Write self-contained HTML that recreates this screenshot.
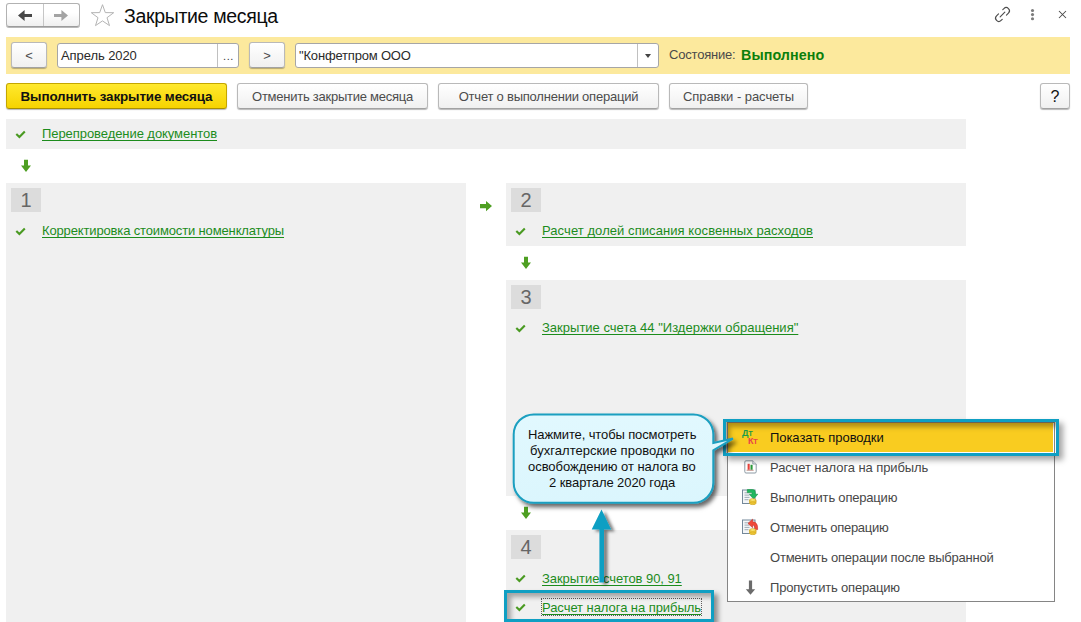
<!DOCTYPE html>
<html lang="ru">
<head>
<meta charset="utf-8">
<title>Закрытие месяца</title>
<style>
*{box-sizing:border-box;margin:0;padding:0}
html,body{width:1081px;height:622px;overflow:hidden;background:#fff}
body{position:relative;font-family:"Liberation Sans",Arial,sans-serif;font-size:13px;color:#333}
.abs{position:absolute}
.btn{position:absolute;height:26px;border:1px solid #b9b9b9;border-bottom-color:#a2a2a2;border-radius:3px;background:linear-gradient(#ffffff,#f0f0f0);box-shadow:0 1px 1px rgba(0,0,0,.28);font-size:13px;color:#4c4c4c;text-align:center;line-height:25px;white-space:nowrap}
.btn span,.inp span{display:inline-block;white-space:nowrap}
.inp{position:absolute;height:25px;border:1px solid #a6a6a6;border-radius:3px;background:#fff;font-size:13px;color:#2a2a2a;line-height:24px;padding-left:3px;white-space:nowrap;overflow:hidden}
.gray{position:absolute;background:#f0f0f0}
.num{position:absolute;width:30px;height:24px;background:#dcdcdc;color:#666;font-size:20px;line-height:25px;text-align:center}
.lnk{position:absolute;color:#1c8c1c;text-decoration:underline;text-decoration-thickness:1px;text-underline-offset:2px;text-decoration-skip-ink:none;font-size:13px;white-space:nowrap;line-height:16px}
.mi{position:absolute;left:42px;font-size:13px;color:#474747;white-space:nowrap;line-height:16px}
.ct{position:absolute;white-space:nowrap;font-size:13px;line-height:16px;color:#101010}

#title{letter-spacing:-.32px;left:124px;font-size:19.5px !important;color:#0c0c0c !important}
#t_apr{letter-spacing:-.08px}
#t_org{letter-spacing:-.18px}
#t_state{letter-spacing:-.2px}
#t_done{letter-spacing:.08px}
#t_b1{letter-spacing:-.12px}
#t_b2{letter-spacing:-.25px}
#t_b3{letter-spacing:-.22px}
#t_b4{letter-spacing:-.05px}
#m1{letter-spacing:-.06px}#m2{letter-spacing:-.085px}#m3{letter-spacing:-.2px}#m4{letter-spacing:-.3px}#m5{letter-spacing:-.22px}#m6{letter-spacing:-.2px}
#c1{letter-spacing:-.12px}#c2{letter-spacing:.04px}#c3{letter-spacing:-.04px}#c4{letter-spacing:-.076px}
#l0{letter-spacing:-.065px}#l1{letter-spacing:-.143px}#l2{letter-spacing:.071px}#l3{letter-spacing:.008px}#l4{letter-spacing:-.056px}#l5{letter-spacing:-.055px}
</style>
</head>
<body>

<!-- nav buttons -->
<div class="abs" id="nav" style="left:6px;top:3px;width:74px;height:24px;border:1px solid #b2b2b2;border-bottom-color:#9c9c9c;border-radius:3px;background:linear-gradient(#fff 40%,#efefef);box-shadow:0 1px 0 rgba(0,0,0,.28)">
  <div class="abs" style="left:36px;top:0;width:1px;height:22px;background:#c6c6c6"></div>
  <svg class="abs" style="left:11px;top:6px" width="14" height="11" viewBox="0 0 14 11"><path d="M0 5.5 L6.6 0 V3.9 H14 V7.1 H6.6 V11 Z" fill="#474747"/></svg>
  <svg class="abs" style="left:47px;top:6px" width="14" height="11" viewBox="0 0 14 11"><path d="M14 5.5 L7.4 0 V3.9 H0 V7.1 H7.4 V11 Z" fill="#a3a3a3"/></svg>
</div>
<!-- star -->
<svg class="abs" style="left:90px;top:3px" width="25" height="24" viewBox="0 0 25 24"><path d="M12.5 1.7 L15.3 9.6 L23.7 9.7 L17 14.7 L19.5 22.6 L12.5 17.9 L5.5 22.6 L8 14.7 L1.3 9.7 L9.7 9.6 Z" fill="#fff" stroke="#b4b4b4" stroke-width="1"/></svg>
<div class="abs" id="title" style="left:124px;top:4px;font-size:19px;line-height:24px;color:#1a1a1a;white-space:nowrap">Закрытие месяца</div>

<!-- top right icons -->
<svg class="abs" style="left:992px;top:4px" width="21" height="21" viewBox="-10.5 -10.5 21 21" fill="none" stroke="#4d4d4d" stroke-width="1.15" stroke-linecap="round"><g transform="rotate(-45)"><path d="M-2.4 -3.2 H-5.2 a3.2 3.2 0 0 0 0 6.4 H-3.6"/><path d="M2.4 3.2 H5.2 a3.2 3.2 0 0 0 0 -6.4 H3.6"/><path d="M-3.3 0 H3.3"/></g></svg>
<svg class="abs" style="left:1030px;top:8px" width="5" height="13" viewBox="0 0 5 13"><circle cx="2.5" cy="2.5" r="1.55" fill="#7c7c7c"/><circle cx="2.5" cy="6.6" r="1.55" fill="#7c7c7c"/><circle cx="2.5" cy="10.7" r="1.55" fill="#7c7c7c"/></svg>
<svg class="abs" style="left:1058px;top:10px" width="9" height="9" viewBox="0 0 9 9"><path d="M1 1 L8 8 M8 1 L1 8" stroke="#4a4a4a" stroke-width="1.05"/></svg>

<!-- yellow band -->
<div class="abs" style="left:6px;top:37px;width:1064px;height:37px;background:#fce99d"></div>
<div class="btn" style="left:11px;top:42px;width:36px;"><span>&lt;</span></div>
<div class="inp" style="left:57px;top:43px;width:182px;"><span id="t_apr">Апрель 2020</span><div class="abs" style="right:0;top:0;width:21px;height:23px;border-left:1px solid #c0c0c0;text-align:center;color:#3a3a3a;padding:0 0 0 1px;font-size:11px;line-height:24px;letter-spacing:.6px">...</div></div>
<div class="btn" style="left:249px;top:42px;width:36px;"><span>&gt;</span></div>
<div class="inp" style="left:295px;top:43px;width:364px;"><span id="t_org">"Конфетпром ООО</span><div class="abs" style="right:0;top:0;width:21px;height:23px;border-left:1px solid #c0c0c0"><div class="abs" style="left:7px;top:10px;border:3px solid transparent;border-top:4px solid #444;border-bottom:0"></div></div></div>
<div class="abs" id="t_state" style="left:669px;top:47px;font-size:13px;line-height:16px;color:#4a4a4a;white-space:nowrap">Состояние:</div>
<div class="abs" id="t_done" style="left:741px;top:47px;font-size:14.3px;font-weight:bold;line-height:16px;color:#0b7f0b;white-space:nowrap">Выполнено</div>

<!-- buttons row -->
<div class="btn" style="left:6px;top:83px;width:221px;background:linear-gradient(#ffe92e,#f6d300);border-color:#c4a600;border-bottom-color:#a98f00;color:#111;font-weight:bold;font-size:13.4px"><span id="t_b1">Выполнить закрытие месяца</span></div>
<div class="btn" style="left:237px;top:83px;width:191px;"><span id="t_b2">Отменить закрытие месяца</span></div>
<div class="btn" style="left:438px;top:83px;width:221px;"><span id="t_b3">Отчет о выполнении операций</span></div>
<div class="btn" style="left:669px;top:83px;width:139px;"><span id="t_b4">Справки - расчеты</span></div>
<div class="btn" style="left:1040px;top:83px;width:30px;color:#111;font-size:16px"><span>?</span></div>

<!-- step 0 -->
<div class="gray" style="left:6px;top:119px;width:960px;height:30px"></div>
<svg class="abs chk" style="left:14.5px;top:130px" width="11" height="9" viewBox="0 0 11 9"><path d="M1.3 3.9 L4.4 7 L9.8 1.4" fill="none" stroke="#4a9a22" stroke-width="2.1"/></svg>
<div class="lnk" id="l0" style="left:42px;top:126px">Перепроведение документов</div>
<svg class="abs" style="left:20px;top:159px" width="12" height="13" viewBox="0 0 12 13"><path d="M4 .8 H8 V6.6 H11 L6 12.9 L1 6.6 H4 Z" fill="#4e9f22"/></svg>

<!-- block 1 -->
<div class="gray" style="left:6px;top:183px;width:460px;height:439px"></div>
<div class="num" style="left:11px;top:188px">1</div>
<svg class="abs chk" style="left:14.5px;top:227px" width="11" height="9" viewBox="0 0 11 9"><path d="M1.3 3.9 L4.4 7 L9.8 1.4" fill="none" stroke="#4a9a22" stroke-width="2.1"/></svg>
<div class="lnk" id="l1" style="left:42px;top:223px">Корректировка стоимости номенклатуры</div>
<svg class="abs" style="left:479px;top:200px" width="14" height="12" viewBox="0 0 14 12"><path d="M1 4 V8.3 H7 V11.2 L13 6.1 L7 1 V4 Z" fill="#4e9f22"/></svg>

<!-- block 2 -->
<div class="gray" style="left:506px;top:183px;width:460px;height:63px"></div>
<div class="num" style="left:511px;top:188px">2</div>
<svg class="abs chk" style="left:514.5px;top:227px" width="11" height="9" viewBox="0 0 11 9"><path d="M1.3 3.9 L4.4 7 L9.8 1.4" fill="none" stroke="#4a9a22" stroke-width="2.1"/></svg>
<div class="lnk" id="l2" style="left:542px;top:223px">Расчет долей списания косвенных расходов</div>
<svg class="abs" style="left:520px;top:256px" width="12" height="13" viewBox="0 0 12 13"><path d="M4 .8 H8 V6.6 H11 L6 12.9 L1 6.6 H4 Z" fill="#4e9f22"/></svg>

<!-- block 3 -->
<div class="gray" style="left:506px;top:280px;width:460px;height:216px"></div>
<div class="num" style="left:511px;top:285px">3</div>
<svg class="abs chk" style="left:514.5px;top:324px" width="11" height="9" viewBox="0 0 11 9"><path d="M1.3 3.9 L4.4 7 L9.8 1.4" fill="none" stroke="#4a9a22" stroke-width="2.1"/></svg>
<div class="lnk" id="l3" style="left:542px;top:320px">Закрытие счета 44 "Издержки обращения"</div>
<svg class="abs" style="left:520px;top:506px" width="12" height="13" viewBox="0 0 12 13"><path d="M4 .8 H8 V6.6 H11 L6 12.9 L1 6.6 H4 Z" fill="#4e9f22"/></svg>

<!-- block 4 -->
<div class="gray" style="left:506px;top:530px;width:460px;height:92px"></div>
<div class="num" style="left:511px;top:535px">4</div>
<svg class="abs chk" style="left:514.5px;top:574px" width="11" height="9" viewBox="0 0 11 9"><path d="M1.3 3.9 L4.4 7 L9.8 1.4" fill="none" stroke="#4a9a22" stroke-width="2.1"/></svg>
<div class="lnk" id="l4" style="left:542px;top:571px">Закрытие счетов 90, 91</div>
<svg class="abs chk" style="left:514.5px;top:603px" width="11" height="9" viewBox="0 0 11 9"><path d="M1.3 3.9 L4.4 7 L9.8 1.4" fill="none" stroke="#4a9a22" stroke-width="2.1"/></svg>
<div class="lnk" id="l5" style="left:542px;top:600px">Расчет налога на прибыль</div>
<div class="abs" style="left:541px;top:598px;width:161px;height:18px;border:1px dotted #5e5e5e"></div>

<!-- highlight box bottom -->
<div class="abs" style="left:504px;top:590px;width:210px;height:32px;border:3px solid #0f9fc3;box-shadow:4px 4px 5px rgba(0,0,0,.42), inset 4px 4px 5px rgba(0,0,0,.32)"></div>

<!-- arrow up -->
<svg class="abs" style="left:580px;top:505px;overflow:visible" width="44" height="82" viewBox="0 0 44 82">
  <defs><filter id="sh" x="-50%" y="-20%" width="200%" height="140%"><feDropShadow dx="3.5" dy="2" stdDeviation="1.6" flood-color="#000" flood-opacity=".5"/></filter></defs>
  <g filter="url(#sh)"><path d="M19.4 77.4 V24.6 H11.7 L21.5 4.4 L31.2 24.6 H24 V77.4 Z" fill="#0f9fc3"/></g>
</svg>

<!-- context menu -->
<div class="abs" id="menu" style="left:727px;top:422px;width:328px;height:180px;background:#fff;border:1px solid #858585">
  <div class="abs" style="left:0;top:0;width:325px;height:29px;background:#f9cc20"></div>
  <div class="abs" style="left:14px;top:6px;font-size:9px;font-weight:bold;line-height:8px;color:#1a9c4a;letter-spacing:-.2px">Д<span style="font-size:7.4px">Т</span></div>
  <div class="abs" style="left:20px;top:13.5px;font-size:9px;font-weight:bold;line-height:8px;color:#e8414a;letter-spacing:-.2px">К<span style="font-size:7.4px">Т</span></div>
  <div class="mi" id="m1" style="top:7px;color:#111">Показать проводки</div>
  <!-- icon: report -->
  <svg class="abs" style="left:16px;top:37px" width="14" height="14" viewBox="0 0 14 14"><path d="M2 .8 H8.8 L12.2 4 V11.8 a1.2 1.2 0 0 1 -1.2 1.2 H2 a1.2 1.2 0 0 1 -1.2 -1.2 V2 A1.2 1.2 0 0 1 2 .8 Z" fill="#fff" stroke="#8c9aa4" stroke-width="1"/><path d="M8.8 .8 V4 H12.2" fill="#e8edf0" stroke="#8c9aa4" stroke-width=".8"/><rect x="3.6" y="3.8" width="2.1" height="6" fill="#e8413a"/><rect x="6.5" y="4.8" width="2.1" height="5" fill="#2a9a3a"/><rect x="2.6" y="9.8" width="7" height=".8" fill="#b0766a"/></svg>
  <div class="mi" id="m2" style="top:37px">Расчет налога на прибыль</div>
  <!-- icon: execute -->
  <svg class="abs" style="left:13px;top:64.5px" width="18" height="18" viewBox="0 0 18 18"><rect x="1.5" y="2" width="12.5" height="13.5" fill="#f3f6f8" stroke="#74889a" stroke-width="1"/><path d="M3.5 4.8 H8.5 M3.5 7.1 H8.5 M3.5 9.4 H8.5 M3.5 11.7 H7.5" stroke="#9eacb6" stroke-width="1"/><path d="M6.3 1.6 H11.6 Q14.3 1.6 14.3 4.4 V6.2 H16.8 L12.6 11 L8.4 6.2 H11 V5 Q11 4.6 10.4 4.6 H6.3 Z" fill="#20b860" stroke="#12933f" stroke-width=".6"/><path d="M8.6 12 V15.3 a3.2 1.3 0 0 0 6.4 0 V12 Z" fill="#f5cf3c" stroke="#cfa21a" stroke-width=".7"/><ellipse cx="11.8" cy="12" rx="3.2" ry="1.3" fill="#ffea7a" stroke="#cfa21a" stroke-width=".7"/><path d="M8.6 13.7 a3.2 1.3 0 0 0 6.4 0" fill="none" stroke="#cfa21a" stroke-width=".7"/></svg>
  <div class="mi" id="m3" style="top:67px">Выполнить операцию</div>
  <!-- icon: cancel -->
  <svg class="abs" style="left:13px;top:94.5px" width="18" height="18" viewBox="0 0 18 18"><rect x="1.5" y="2" width="12.5" height="13.5" fill="#f3f6f8" stroke="#74889a" stroke-width="1"/><path d="M3.5 4.8 H8.5 M3.5 7.1 H8.5 M3.5 9.4 H8.5 M3.5 11.7 H7.5" stroke="#9eacb6" stroke-width="1"/><path d="M11.6 1.2 L7 5.4 L11.6 9.6 V7 Q13.9 7.1 13.9 11.6 H16.6 Q17.2 4 11.6 3.8 Z" fill="#f04a3a" stroke="#c62c24" stroke-width=".6"/><path d="M8.6 12 V15.3 a3.2 1.3 0 0 0 6.4 0 V12 Z" fill="#f5cf3c" stroke="#cfa21a" stroke-width=".7"/><ellipse cx="11.8" cy="12" rx="3.2" ry="1.3" fill="#ffea7a" stroke="#cfa21a" stroke-width=".7"/><path d="M8.6 13.7 a3.2 1.3 0 0 0 6.4 0" fill="none" stroke="#cfa21a" stroke-width=".7"/></svg>
  <div class="mi" id="m4" style="top:97px">Отменить операцию</div>
  <div class="mi" id="m5" style="top:127px">Отменить операции после выбранной</div>
  <svg class="abs" style="left:16.5px;top:156.5px" width="11" height="15" viewBox="0 0 11 15"><path d="M3.9 .5 H7.1 V9.3 H10.2 L5.5 14.7 L.8 9.3 H3.9 Z" fill="#6b6b6b"/></svg>
  <div class="mi" id="m6" style="top:157px">Пропустить операцию</div>
</div>
<!-- highlight box menu -->
<div class="abs" style="left:723px;top:419px;width:336px;height:37px;border:3px solid #0f9fc3;box-shadow:4px 4px 6px rgba(0,0,0,.36), inset 4px 5px 5px rgba(60,40,0,.38)"></div>

<!-- callout -->
<svg class="abs" style="left:500px;top:405px;overflow:visible" width="260" height="110" viewBox="0 0 260 110">
  <defs>
    <linearGradient id="cg" x1="0" y1="0" x2="0" y2="1"><stop offset="0" stop-color="#e1f8fe"/><stop offset="1" stop-color="#dbf6fd"/></linearGradient>
    <filter id="sh2" x="-20%" y="-20%" width="140%" height="150%"><feDropShadow dx="3" dy="3.5" stdDeviation="2.2" flood-color="#000" flood-opacity=".6"/></filter>
  </defs>
  <path filter="url(#sh2)" d="M33.7 9.4 H193.3 a20 20 0 0 1 20 20 V38 L233 33.6 L213.3 45.2 V77.8 a20 20 0 0 1 -20 20 H33.7 a20 20 0 0 1 -20 -20 V29.4 a20 20 0 0 1 20 -20 Z" fill="url(#cg)" stroke="#1a9fc0" stroke-width="2" stroke-linejoin="miter"/>
</svg>
<div class="ct" id="c1" style="left:528px;top:427px">Нажмите, чтобы посмотреть</div>
<div class="ct" id="c2" style="left:530px;top:443px">бухгалтерские проводки по</div>
<div class="ct" id="c3" style="left:528px;top:459px">освобождению от налога во</div>
<div class="ct" id="c4" style="left:549px;top:475px">2 квартале 2020 года</div>

</body>
</html>
